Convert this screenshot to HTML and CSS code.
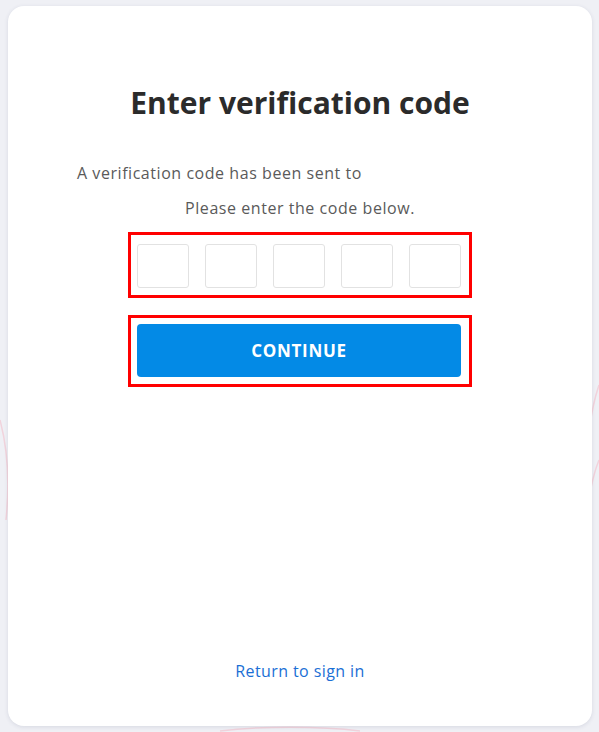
FILE: index.html
```html
<!DOCTYPE html>
<html lang="en">
<head>
    <meta charset="UTF-8">
    <meta name="viewport" content="width=device-width, initial-scale=1.0">
    <title>Enter verification code</title>
    <link rel="stylesheet" href="styles.css">
</head>
<body>
    <svg class="backdrop" width="599" height="732" viewBox="0 0 599 732" aria-hidden="true">
        <path d="M0 420 C 8 450, 10 480, 6 520" />
        <path d="M599 385 C 594 400, 592 410, 590 425" />
        <path d="M599 460 C 595 470, 593 478, 591 488" />
        <path d="M220 731 C 260 726, 320 726, 360 731" />
    </svg>
    <div class="card">
        <h1>Enter verification code</h1>
        <p class="sent-to">A verification code has been sent to</p>
        <p class="hint">Please enter the code below.</p>
        <div class="outline code-row">
            <input type="text" maxlength="1" class="digit">
            <input type="text" maxlength="1" class="digit">
            <input type="text" maxlength="1" class="digit">
            <input type="text" maxlength="1" class="digit">
            <input type="text" maxlength="1" class="digit">
        </div>
        <div class="outline button-row">
            <button type="submit">CONTINUE</button>
        </div>
        <a href="#" class="return-link">Return to sign in</a>
    </div>
</body>
</html>
```

FILE: styles.css
```css
body {
    font-family: "Open Sans", Arial, sans-serif;
    background-color: #eff0f5;
    margin: 0;
    padding: 6px 7px 6px 8px;
    position: relative;
}

.backdrop {
    position: absolute;
    top: 0;
    left: 0;
    fill: none;
    stroke: #f1d3dc;
    stroke-width: 1.5;
}

.card {
    position: relative;
    background-color: #fff;
    border-radius: 16px;
    box-shadow: 0 1px 4px rgba(40, 50, 90, 0.12);
    height: 720px;
    box-sizing: border-box;
    padding-top: 77px;
    display: flex;
    flex-direction: column;
    align-items: center;
}

h1 {
    margin: 0;
    font-size: 30px;
    line-height: 40px;
    font-weight: 700;
    color: #2b2b2b;
}

.sent-to {
    align-self: stretch;
    margin: 38px 0 0;
    padding-left: 69px;
    font-size: 16px;
    line-height: 24px;
    letter-spacing: 0.55px;
    color: #5a5a5a;
}

.hint {
    margin: 11px 0 0;
    font-size: 16px;
    line-height: 24px;
    letter-spacing: 0.55px;
    color: #5a5a5a;
}

.outline {
    border: 3px solid #ff0000;
    width: 344px;
    box-sizing: border-box;
}

.code-row {
    margin-top: 12px;
    display: flex;
    gap: 16px;
    padding: 9px 8px 7px 6px;
}

.digit {
    width: 52px;
    height: 44px;
    box-sizing: border-box;
    border: 1px solid #e2e2e2;
    border-radius: 3px;
    padding: 0;
    text-align: center;
    font-size: 18px;
}

.button-row {
    margin-top: 17px;
    padding: 6px 7px 7px 6px;
}

button {
    display: block;
    width: 324px;
    height: 53px;
    background-color: #038ae6;
    color: #fff;
    border: none;
    border-radius: 4px;
    font-family: inherit;
    font-size: 17px;
    font-weight: 700;
    letter-spacing: 0.7px;
    cursor: pointer;
}

button:hover {
    background-color: #0277c9;
}

.return-link {
    margin-top: auto;
    margin-bottom: 43px;
    font-size: 16px;
    line-height: 24px;
    letter-spacing: 0.4px;
    color: #1b6fd5;
    text-decoration: none;
}
```
